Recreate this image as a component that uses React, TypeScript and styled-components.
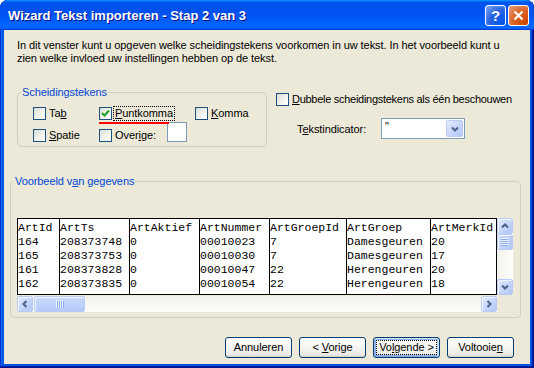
import React from 'react';
import styled, { createGlobalStyle } from 'styled-components';

const GlobalStyle = createGlobalStyle`
  html, body { margin: 0; padding: 0; background: #ffffff; }
  body {
    font-family: "Liberation Sans", Arial, sans-serif;
    font-size: 11px;
    letter-spacing: -0.08px;
    color: #000;
  }
  * { box-sizing: border-box; }
`;

const Window = styled.div`
  width: 534px;
  height: 368px;
  display: flex;
  flex-direction: column;
  background: #0054e3;
  border-radius: 8px 8px 0 0;
  box-shadow: inset -1px -1px #00138c, inset 1px 1px #0831d9, inset -2px -2px #001ea0, inset 2px 2px #166aee;
  overflow: hidden;
`;

const TitleBar = styled.div`
  height: 30px;
  flex: none;
  display: flex;
  align-items: center;
  padding: 0 5px 0 8px;
  background: linear-gradient(180deg, #0997ff, #0053ee 8%, #0050ee 40%, #06f 88%, #06f 93%, #005bff 95%, #003dd7 96%, #003dd7);
  border-radius: 8px 8px 0 0;
`;

const Title = styled.div`
  flex: 1;
  color: #fff;
  font-weight: bold;
  font-size: 13px;
  letter-spacing: 0;
  text-shadow: 1px 1px #0f1089;
`;

const CaptionButton = styled.div<{ $close?: boolean }>`
  width: 21px;
  height: 21px;
  margin-left: 2px;
  display: flex;
  align-items: center;
  justify-content: center;
  border: 1px solid #fff;
  border-radius: 3px;
  color: #fff;
  font-weight: bold;
  font-size: 15px;
  background: ${p =>
    p.$close
      ? 'radial-gradient(circle at 90% 90%, #cc4600 0%, #dc6527 55%, #e5a18a 100%)'
      : 'radial-gradient(circle at 90% 90%, #0054e9 0%, #2663de 55%, #87a9f1 100%)'};
`;

const Body = styled.div`
  flex: 1;
  margin: 0 4px 4px;
  background: #ece9d8;
  padding: 9px 0 0 6px;
  display: flex;
  flex-direction: column;
`;

const Intro = styled.p`
  margin: 0 0 0 7px;
  line-height: 13px;
`;

const Key = styled.span`
  text-decoration: underline;
`;

const TopRow = styled.div`
  display: flex;
  align-items: flex-start;
  margin: 27px 0 0 7px;
`;

const Group = styled.div<{ $w: number; $h: number }>`
  position: relative;
  flex: none;
  width: ${p => p.$w}px;
  height: ${p => p.$h}px;
  border: 1px solid #d0d0bf;
  border-radius: 4px;
`;

const Legend = styled.span`
  position: absolute;
  top: -7px;
  left: 3px;
  padding: 0 1px;
  line-height: 13px;
  background: #ece9d8;
  color: #0046d5;
`;

const OptionGrid = styled.div`
  display: grid;
  grid-template-columns: 66px 96px auto;
  row-gap: 2px;
  align-items: end;
  padding: 13px 0 0 15px;
`;

const Option = styled.label<{ $marked?: boolean; $w?: number }>`
  position: relative;
  display: inline-flex;
  align-items: center;
  gap: 2px;
  height: 14px;
  width: ${p => (p.$w ? `${p.$w}px` : 'auto')};
  ${p =>
    p.$marked &&
    `&::after {
      content: '';
      position: absolute;
      left: 0;
      top: 16px;
      width: 70px;
      height: 2px;
      background: #f00;
    }`}
`;

const Box = styled.span`
  width: 13px;
  height: 13px;
  flex: none;
  display: flex;
  align-items: center;
  justify-content: center;
  border: 1px solid #1c5180;
  background: linear-gradient(135deg, #dcdcd7 0%, #f4f4f0 60%, #ffffff 100%);
`;

const Caption = styled.span<{ $focus?: boolean; $tight?: boolean }>`
  padding: 0 1px;
  line-height: 13px;
  letter-spacing: ${p => (p.$tight ? '-0.28px' : 'inherit')};
  outline: ${p => (p.$focus ? '1px dotted #000' : 'none')};
`;

const OtherCell = styled.div`
  display: flex;
  align-items: flex-end;
`;

const TextBox = styled.div`
  width: 20px;
  height: 20px;
  border: 1px solid #7f9db9;
  background: #fff;
`;

const RightCol = styled.div`
  display: flex;
  flex-direction: column;
  margin-left: 9px;
`;

const IndicatorRow = styled.div`
  display: flex;
  align-items: center;
  margin-top: 12px;
  padding-left: 21px;
`;

const FieldLabel = styled.span`
  width: 84px;
`;

const Combo = styled.div`
  width: 84px;
  height: 21px;
  display: flex;
  border: 1px solid #7f9db9;
  background: #fff;
`;

const ComboText = styled.span`
  flex: 1;
  padding: 1px 0 0 3px;
  line-height: 13px;
`;

const DropButton = styled.div`
  width: 17px;
  height: 17px;
  margin: 1px;
  display: flex;
  align-items: center;
  justify-content: center;
  border-radius: 2px;
  border: 1px solid #bccdf5;
  background: linear-gradient(135deg, #e3ebfe 0%, #c6d6fc 55%, #b2c6f6 100%);
`;

const PreviewGroup = styled(Group)`
  margin-top: 34px;
  padding: 36px 0 0 6px;
`;

const Scroller = styled.div`
  display: grid;
  grid-template-columns: 480px 16px;
  grid-template-rows: 78px 16px;
`;

const Table = styled.div`
  display: flex;
  height: 77px;
  border: 1px solid #000;
  background: #fff;
  overflow: hidden;
  font-family: "Liberation Mono", "Courier New", monospace;
  font-size: 11.5px;
  letter-spacing: 0;
`;

const Column = styled.div<{ $w: number }>`
  width: ${p => p.$w}px;
  flex: none;
  padding-top: 2px;
  border-left: 1px solid #000;
  &:first-child { border-left: none; }
`;

const Cell = styled.div`
  height: 14px;
  line-height: 14px;
  white-space: nowrap;
`;

const VScroll = styled.div`
  display: flex;
  flex-direction: column;
  height: 77px;
  background: linear-gradient(90deg, #f3f1ec, #fefefb);
`;

const HScroll = styled.div`
  display: flex;
  background: linear-gradient(180deg, #f3f1ec, #fefefb);
`;

const Corner = styled.div`
  background: #ece9d8;
`;

const ScrollButton = styled.div`
  width: 16px;
  height: 16px;
  flex: none;
  display: flex;
  align-items: center;
  justify-content: center;
  border: 1px solid #b7cbf6;
  border-radius: 2px;
  background: linear-gradient(135deg, #e1eafe 0%, #c5d6fc 55%, #b3c7f5 100%);
  box-shadow: inset 1px 1px #f4f7fe;
`;

const Thumb = styled(ScrollButton)<{ $len: number; $vertical?: boolean }>`
  width: ${p => (p.$vertical ? 16 : p.$len)}px;
  height: ${p => (p.$vertical ? p.$len : 16)}px;
  margin: ${p => (p.$vertical ? '0' : '0 0 0 1px')};
  background: linear-gradient(${p => (p.$vertical ? '90deg' : '180deg')}, #cad9fd 0%, #c1d3fb 50%, #b4c8f6 100%);
`;

const Spacer = styled.div`
  flex: 1;
`;

const ButtonRow = styled.div`
  display: flex;
  justify-content: flex-end;
  gap: 7px;
  margin-top: 19px;
  padding-right: 16px;
`;

const Button = styled.div<{ $default?: boolean }>`
  width: 67px;
  height: 21px;
  display: flex;
  align-items: center;
  justify-content: center;
  border: 1px solid #003c74;
  border-radius: 3px;
  background: linear-gradient(180deg, #fff, #ecebe6 86%, #d6d0c5);
  box-shadow: ${p =>
    p.$default
      ? 'inset -1px 1px #cee7ff, inset 1px 2px #98b8ea, inset -2px 2px #bcd4f6, inset 1px -1px #89ade4, inset 2px -2px #89ade4'
      : 'none'};
`;

const ButtonText = styled.span<{ $focus?: boolean }>`
  padding: 0 2px;
  line-height: 13px;
  outline: ${p => (p.$focus ? '1px dotted #000' : 'none')};
`;

const Chevron = ({ dir }: { dir: 'up' | 'down' | 'left' | 'right' }) => {
  const rot = { down: 0, up: 180, left: 90, right: -90 }[dir];
  return (
    <svg width="8" height="8" viewBox="0 0 8 8" style={{ transform: `rotate(${rot}deg)` }}>
      <path d="M1 2.5 L4 5.5 L7 2.5" fill="none" stroke="#4d6185" strokeWidth="2" />
    </svg>
  );
};

const Grip = ({ vertical }: { vertical?: boolean }) => (
  <svg width="8" height="8" viewBox="0 0 8 8" style={{ transform: vertical ? 'rotate(90deg)' : 'none' }}>
    {[1, 3, 5, 7].map(x => (
      <line key={x} x1={x - 0.5} y1="0" x2={x - 0.5} y2="8" stroke="#eef3fe" strokeWidth="1" />
    ))}
    {[1, 3, 5, 7].map(x => (
      <line key={`d${x}`} x1={x + 0.5} y1="1" x2={x + 0.5} y2="8" stroke="#8caae6" strokeWidth="1" />
    ))}
  </svg>
);

const Check = () => (
  <svg width="9" height="9" viewBox="0 0 9 9">
    <path d="M1 4 L3.5 6.5 L8 1.5" fill="none" stroke="#21a121" strokeWidth="2" />
  </svg>
);

// content widths between the grid lines of the preview
const columns = [
  { w: 41, cells: ['ArtId', '164', '165', '161', '162'] },
  { w: 69, cells: ['ArtTs', '208373748', '208373753', '208373828', '208373835'] },
  { w: 69, cells: ['ArtAktief', '0', '0', '0', '0'] },
  { w: 69, cells: ['ArtNummer', '00010023', '00010030', '00010047', '00010054'] },
  { w: 76, cells: ['ArtGroepId', '7', '7', '22', '22'] },
  { w: 83, cells: ['ArtGroep', 'Damesgeuren', 'Damesgeuren', 'Herengeuren', 'Herengeuren'] },
  { w: 65, cells: ['ArtMerkId', '20', '17', '20', '18'] },
];

export default function App() {
  return (
    <>
      <GlobalStyle />
      <Window>
        <TitleBar>
          <Title>Wizard Tekst importeren - Stap 2 van 3</Title>
          <CaptionButton>?</CaptionButton>
          <CaptionButton $close>
            <svg width="11" height="11" viewBox="0 0 11 11">
              <path d="M1.5 1.5 L9.5 9.5 M9.5 1.5 L1.5 9.5" stroke="#fff" strokeWidth="2.2" />
            </svg>
          </CaptionButton>
        </TitleBar>
        <Body>
          <Intro>
            In dit venster kunt u opgeven welke scheidingstekens voorkomen in uw tekst. In het voorbeeld kunt u
            <br />
            zien welke invloed uw instellingen hebben op de tekst.
          </Intro>

          <TopRow>
            <Group $w={250} $h={55}>
              <Legend>Scheidingstekens</Legend>
              <OptionGrid>
                <Option>
                  <Box />
                  <Caption>Ta<Key>b</Key></Caption>
                </Option>
                <Option $marked>
                  <Box><Check /></Box>
                  <Caption $focus><Key>P</Key>untkomma</Caption>
                </Option>
                <Option>
                  <Box />
                  <Caption><Key>K</Key>omma</Caption>
                </Option>
                <Option>
                  <Box />
                  <Caption><Key>S</Key>patie</Caption>
                </Option>
                <OtherCell>
                  <Option $w={68}>
                    <Box />
                    <Caption>Over<Key>i</Key>ge:</Caption>
                  </Option>
                  <TextBox />
                </OtherCell>
              </OptionGrid>
            </Group>

            <RightCol>
              <Option>
                <Box />
                <Caption $tight><Key>D</Key>ubbele scheidingstekens als één beschouwen</Caption>
              </Option>
              <IndicatorRow>
                <FieldLabel>T<Key>e</Key>kstindicator:</FieldLabel>
                <Combo>
                  <ComboText>"</ComboText>
                  <DropButton><Chevron dir="down" /></DropButton>
                </Combo>
              </IndicatorRow>
            </RightCol>
          </TopRow>

          <PreviewGroup $w={511} $h={137}>
            <Legend>Voorbeeld v<Key>a</Key>n gegevens</Legend>
            <Scroller>
              <Table>
                {columns.map((col, i) => (
                  <Column key={i} $w={col.w + (i === 0 ? 0 : 1)}>
                    {col.cells.map((c, j) => (
                      <Cell key={j}>{c}</Cell>
                    ))}
                  </Column>
                ))}
              </Table>
              <VScroll>
                <ScrollButton><Chevron dir="up" /></ScrollButton>
                <Thumb $vertical $len={16}><Grip vertical /></Thumb>
                <Spacer />
                <ScrollButton><Chevron dir="down" /></ScrollButton>
              </VScroll>
              <HScroll>
                <ScrollButton><Chevron dir="left" /></ScrollButton>
                <Thumb $len={51}><Grip /></Thumb>
                <Spacer />
                <ScrollButton><Chevron dir="right" /></ScrollButton>
              </HScroll>
              <Corner />
            </Scroller>
          </PreviewGroup>

          <ButtonRow>
            <Button><ButtonText>Annuleren</ButtonText></Button>
            <Button><ButtonText>&lt; <Key>V</Key>orige</ButtonText></Button>
            <Button $default><ButtonText $focus>Vo<Key>l</Key>gende &gt;</ButtonText></Button>
            <Button><ButtonText>Voltooie<Key>n</Key></ButtonText></Button>
          </ButtonRow>
        </Body>
      </Window>
    </>
  );
}
